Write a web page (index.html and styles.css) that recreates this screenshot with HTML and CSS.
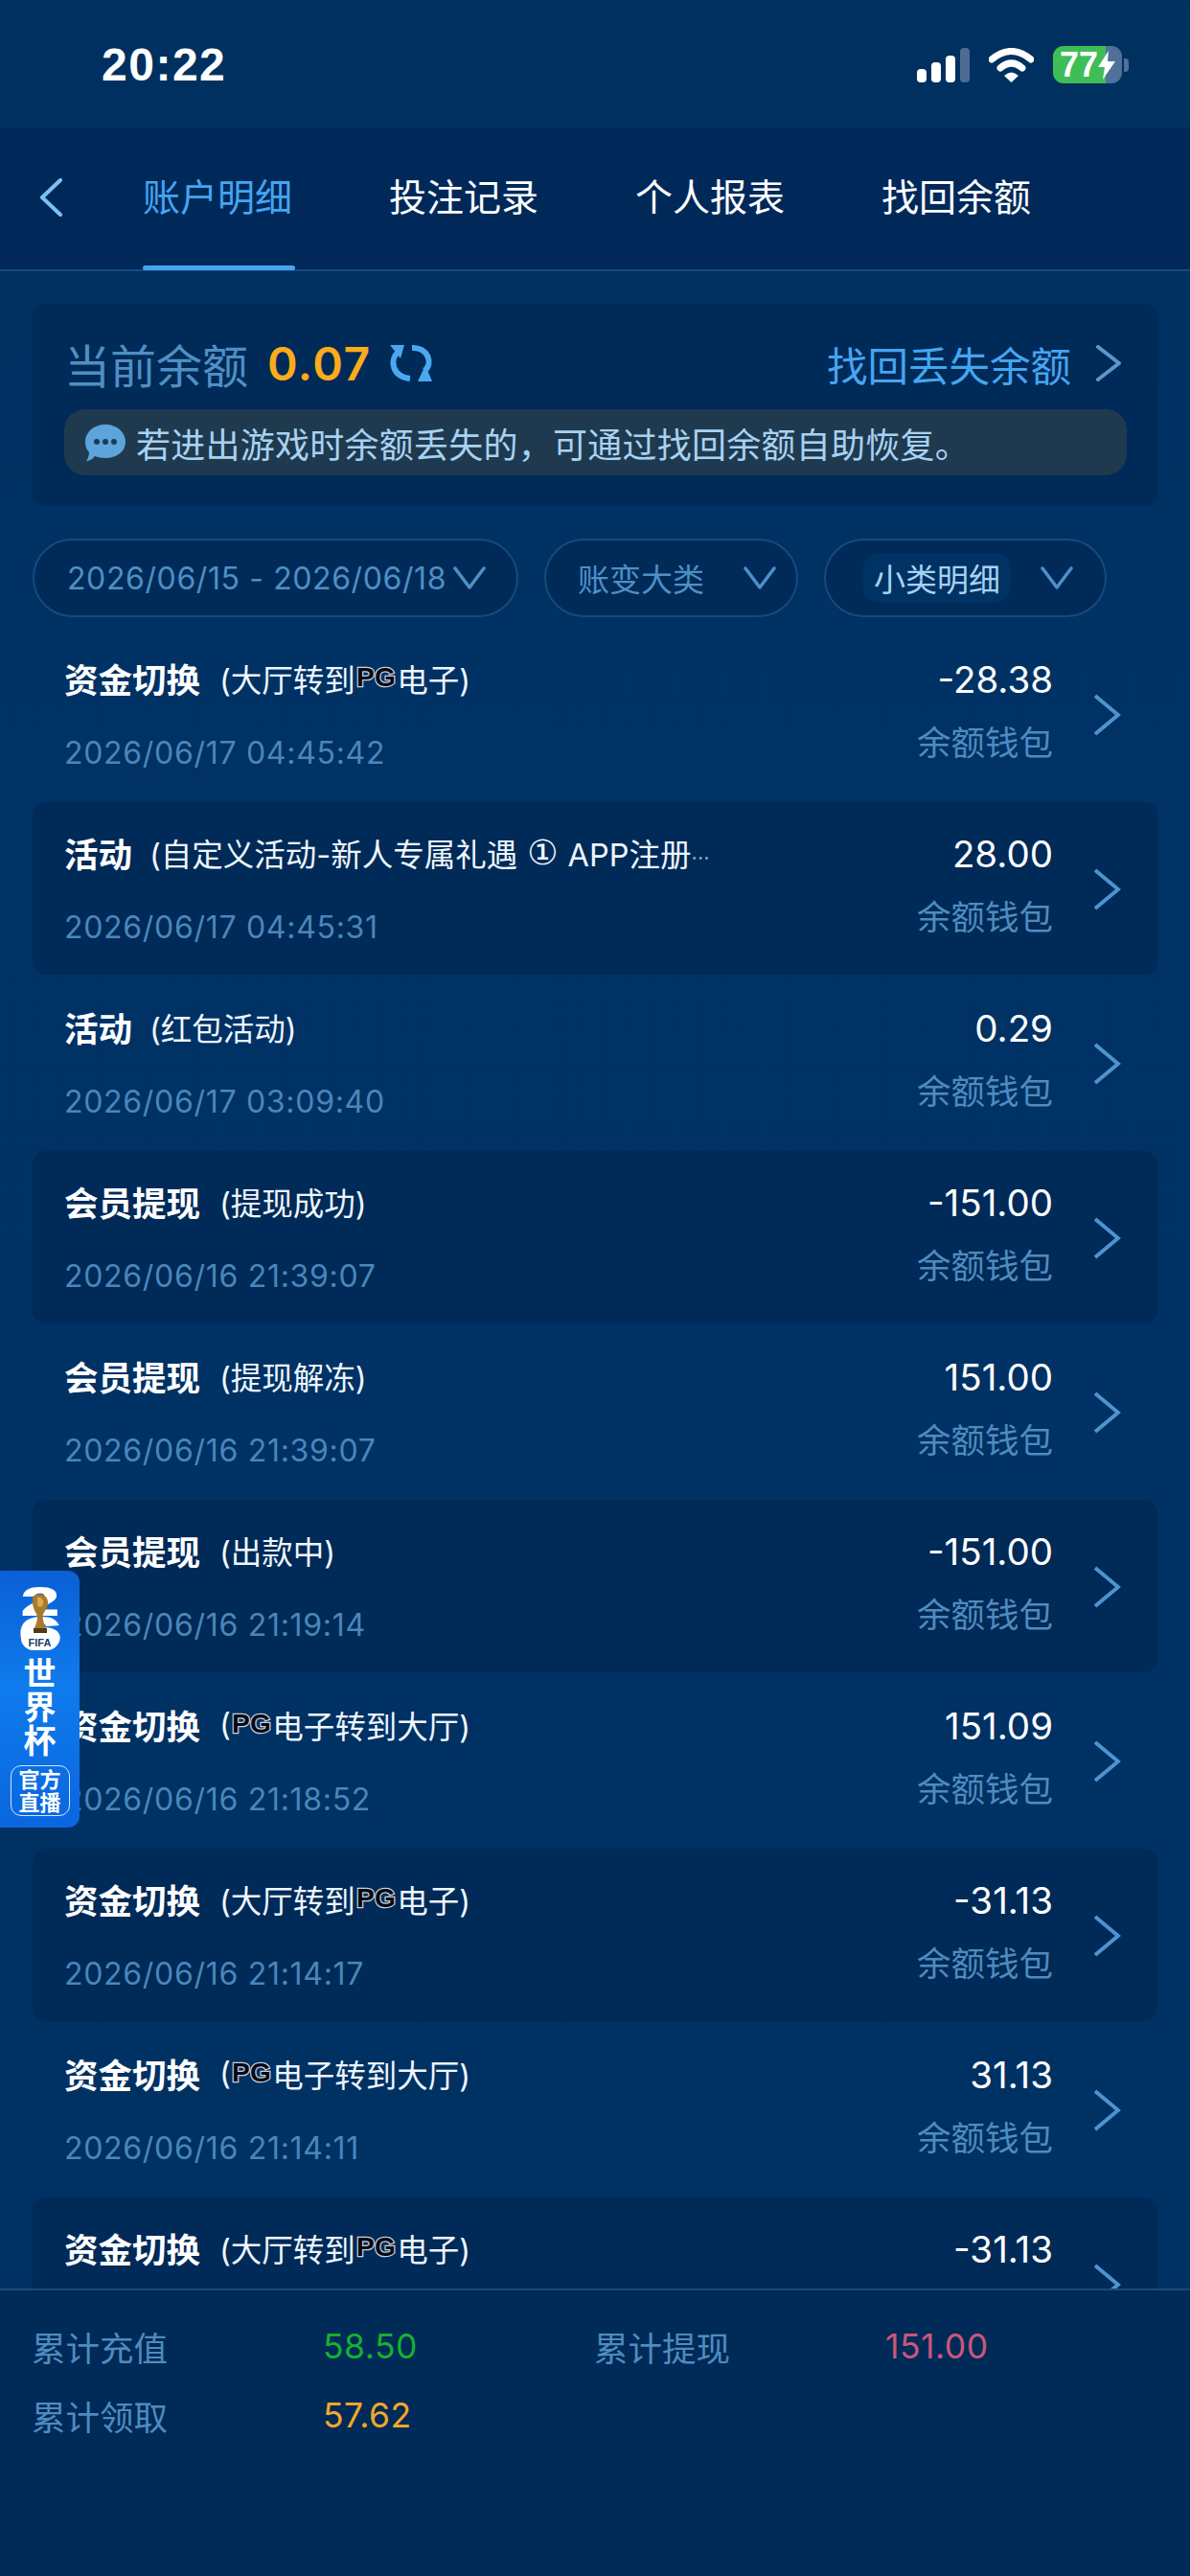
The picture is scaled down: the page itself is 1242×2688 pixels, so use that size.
FILE: index.html
```html
<!DOCTYPE html>
<html lang="zh-CN">
<head>
    <meta charset="UTF-8">
    <meta name="viewport" content="width=device-width, initial-scale=1.0">
    <title>账户明细</title>
    <link rel="stylesheet" href="styles.css">
</head>
<body>

<div class="app">
    <div class="status-bar">
        <span class="clock">20:22</span>
        <div class="status-icons">
            <svg class="signal" width="55" height="36" viewBox="0 0 55 36">
                <rect x="0" y="22" width="10" height="14" rx="4" fill="#fff"/>
                <rect x="15" y="15" width="10" height="21" rx="4" fill="#fff"/>
                <rect x="30" y="8" width="10" height="28" rx="4" fill="#fff"/>
                <rect x="45" y="0" width="10" height="36" rx="4" fill="#4d6b91"/>
            </svg>
            <svg class="wifi" width="47" height="36" viewBox="0 0 47 36">
                <path d="M3 12 Q23.500 -5 44 12" fill="none" stroke="#fff" stroke-width="7" stroke-linecap="round"/>
                <path d="M12 21 Q23.500 11 35 21" fill="none" stroke="#fff" stroke-width="7" stroke-linecap="round"/>
                <path d="M16 29 Q23.500 22 31 29 L23.500 36 Z" fill="#fff"/>
            </svg>
            <div class="battery">
                <div class="battery-body">
                    <span class="battery-num">77</span>
                    <svg class="battery-bolt" width="18" height="30" viewBox="0 0 18 30">
                        <path d="M11 0 L0 17 H7 L5 30 L18 11 H10 Z" fill="#fff"/>
                    </svg>
                </div>
                <div class="battery-cap"></div>
            </div>
        </div>
    </div>

    <div class="nav">
        <svg class="nav-back" width="26" height="40" viewBox="0 0 26 40">
            <path d="M23 2 L4 20 L23 38" fill="none" stroke="#7cc0f5" stroke-width="4" stroke-linecap="round" stroke-linejoin="round"/>
        </svg>
        <div class="tab active">账户明细</div>
        <div class="tab">投注记录</div>
        <div class="tab">个人报表</div>
        <div class="tab">找回余额</div>
    </div>

    <div class="balance-card">
        <div class="balance-top">
            <span class="balance-label">当前余额</span>
            <span class="balance-value">0.07</span>
            <svg class="refresh" width="46" height="40" viewBox="0 0 46 40">
                <path d="M10 8 C0 16 3 34 22 36" fill="none" stroke="#4aa8f2" stroke-width="6"/>
                <path d="M1 1 H16 L12 15 Z" fill="#4aa8f2"/>
                <path d="M24 4 C40 3 47 20 37 28" fill="none" stroke="#4aa8f2" stroke-width="6"/>
                <path d="M30 39 H45 L38 22 Z" fill="#4aa8f2"/>
            </svg>
            <span class="recover-link">找回丢失余额</span>
            <svg class="chevron-big" width="28" height="38" viewBox="0 0 28 38">
                <path d="M3 2 L25 19 L3 36" fill="none" stroke="#5b96cc" stroke-width="4" stroke-linecap="round" stroke-linejoin="round"/>
            </svg>
        </div>
        <div class="notice">
            <svg class="notice-icon" width="44" height="40" viewBox="0 0 44 40">
                <path d="M22 1 C34 1 43 9 43 19 C43 29 34 36 22 36 C18 36 14 35 11 34 C9 37 5 39 2 39 C4 36 5 33 5 30 C2 27 1 23 1 19 C1 9 10 1 22 1 Z" fill="#5ca4dc"/>
                <circle cx="13" cy="19" r="3" fill="#1d3a55"/>
                <circle cx="22" cy="19" r="3" fill="#1d3a55"/>
                <circle cx="31" cy="19" r="3" fill="#1d3a55"/>
            </svg>
            <span>若进出游戏时余额丢失的，可通过找回余额自助恢复。</span>
        </div>
    </div>

    <div class="filters">
        <div class="filter filter-date">
            <span>2026/06/15 - 2026/06/18</span>
            <svg width="34" height="24" viewBox="0 0 34 24"><path d="M2 2 L17 22 L32 2" fill="none" stroke="#4f8fc8" stroke-width="3.500" stroke-linecap="round" stroke-linejoin="round"/></svg>
        </div>
        <div class="filter filter-type">
            <span>账变大类</span>
            <svg width="34" height="24" viewBox="0 0 34 24"><path d="M2 2 L17 22 L32 2" fill="none" stroke="#4f8fc8" stroke-width="3.500" stroke-linecap="round" stroke-linejoin="round"/></svg>
        </div>
        <div class="filter filter-sub">
            <span class="filter-selected">小类明细</span>
            <svg width="34" height="24" viewBox="0 0 34 24"><path d="M2 2 L17 22 L32 2" fill="none" stroke="#4f8fc8" stroke-width="3.500" stroke-linecap="round" stroke-linejoin="round"/></svg>
        </div>
    </div>

    <div class="list">
        <div class="row">
            <div class="row-left">
                <div class="row-title"><b>资金切换</b><span class="row-sub">(大厅转到<i class="pg">PG</i>电子)</span></div>
                <div class="row-date">2026/06/17 04:45:42</div>
            </div>
            <div class="row-right"><div class="row-amount">-28.38</div><div class="row-wallet">余额钱包</div></div>
            <svg class="row-arrow" width="30" height="44" viewBox="0 0 30 44"><path d="M3 2 L27 22 L3 42" fill="none" stroke="#4f93cf" stroke-width="4"/></svg>
        </div>
        <div class="row">
            <div class="row-left">
                <div class="row-title"><b>活动</b><span class="row-sub activity-sub">(自定义活动-新人专属礼遇<em class="circled">①</em>APP注册<em class="more">...</em></span></div>
                <div class="row-date">2026/06/17 04:45:31</div>
            </div>
            <div class="row-right"><div class="row-amount">28.00</div><div class="row-wallet">余额钱包</div></div>
            <svg class="row-arrow" width="30" height="44" viewBox="0 0 30 44"><path d="M3 2 L27 22 L3 42" fill="none" stroke="#4f93cf" stroke-width="4"/></svg>
        </div>
        <div class="row">
            <div class="row-left">
                <div class="row-title"><b>活动</b><span class="row-sub activity-sub">(红包活动)</span></div>
                <div class="row-date">2026/06/17 03:09:40</div>
            </div>
            <div class="row-right"><div class="row-amount">0.29</div><div class="row-wallet">余额钱包</div></div>
            <svg class="row-arrow" width="30" height="44" viewBox="0 0 30 44"><path d="M3 2 L27 22 L3 42" fill="none" stroke="#4f93cf" stroke-width="4"/></svg>
        </div>
        <div class="row">
            <div class="row-left">
                <div class="row-title"><b>会员提现</b><span class="row-sub">(提现成功)</span></div>
                <div class="row-date">2026/06/16 21:39:07</div>
            </div>
            <div class="row-right"><div class="row-amount">-151.00</div><div class="row-wallet">余额钱包</div></div>
            <svg class="row-arrow" width="30" height="44" viewBox="0 0 30 44"><path d="M3 2 L27 22 L3 42" fill="none" stroke="#4f93cf" stroke-width="4"/></svg>
        </div>
        <div class="row">
            <div class="row-left">
                <div class="row-title"><b>会员提现</b><span class="row-sub">(提现解冻)</span></div>
                <div class="row-date">2026/06/16 21:39:07</div>
            </div>
            <div class="row-right"><div class="row-amount">151.00</div><div class="row-wallet">余额钱包</div></div>
            <svg class="row-arrow" width="30" height="44" viewBox="0 0 30 44"><path d="M3 2 L27 22 L3 42" fill="none" stroke="#4f93cf" stroke-width="4"/></svg>
        </div>
        <div class="row">
            <div class="row-left">
                <div class="row-title"><b>会员提现</b><span class="row-sub">(出款中)</span></div>
                <div class="row-date">2026/06/16 21:19:14</div>
            </div>
            <div class="row-right"><div class="row-amount">-151.00</div><div class="row-wallet">余额钱包</div></div>
            <svg class="row-arrow" width="30" height="44" viewBox="0 0 30 44"><path d="M3 2 L27 22 L3 42" fill="none" stroke="#4f93cf" stroke-width="4"/></svg>
        </div>
        <div class="row">
            <div class="row-left">
                <div class="row-title"><b>资金切换</b><span class="row-sub">(<i class="pg">PG</i>电子转到大厅)</span></div>
                <div class="row-date">2026/06/16 21:18:52</div>
            </div>
            <div class="row-right"><div class="row-amount">151.09</div><div class="row-wallet">余额钱包</div></div>
            <svg class="row-arrow" width="30" height="44" viewBox="0 0 30 44"><path d="M3 2 L27 22 L3 42" fill="none" stroke="#4f93cf" stroke-width="4"/></svg>
        </div>
        <div class="row">
            <div class="row-left">
                <div class="row-title"><b>资金切换</b><span class="row-sub">(大厅转到<i class="pg">PG</i>电子)</span></div>
                <div class="row-date">2026/06/16 21:14:17</div>
            </div>
            <div class="row-right"><div class="row-amount">-31.13</div><div class="row-wallet">余额钱包</div></div>
            <svg class="row-arrow" width="30" height="44" viewBox="0 0 30 44"><path d="M3 2 L27 22 L3 42" fill="none" stroke="#4f93cf" stroke-width="4"/></svg>
        </div>
        <div class="row">
            <div class="row-left">
                <div class="row-title"><b>资金切换</b><span class="row-sub">(<i class="pg">PG</i>电子转到大厅)</span></div>
                <div class="row-date">2026/06/16 21:14:11</div>
            </div>
            <div class="row-right"><div class="row-amount">31.13</div><div class="row-wallet">余额钱包</div></div>
            <svg class="row-arrow" width="30" height="44" viewBox="0 0 30 44"><path d="M3 2 L27 22 L3 42" fill="none" stroke="#4f93cf" stroke-width="4"/></svg>
        </div>
        <div class="row">
            <div class="row-left">
                <div class="row-title"><b>资金切换</b><span class="row-sub">(大厅转到<i class="pg">PG</i>电子)</span></div>
            </div>
            <div class="row-right"><div class="row-amount">-31.13</div></div>
            <svg class="row-arrow" width="30" height="44" viewBox="0 0 30 44"><path d="M3 2 L27 22 L3 42" fill="none" stroke="#4f93cf" stroke-width="4"/></svg>
        </div>
    </div>

    <div class="totals">
        <div class="total-item"><span class="total-label">累计充值</span><span class="total-value green">58.50</span></div>
        <div class="total-item"><span class="total-label">累计提现</span><span class="total-value red">151.00</span></div>
        <div class="total-item"><span class="total-label">累计领取</span><span class="total-value orange">57.62</span></div>
    </div>

    <!-- floating world cup badge -->
    <div class="wc-badge">
        <div class="wc-logo">
            <span class="wc-digit wc-two">2</span>
            <span class="wc-digit wc-six">6</span>
            <span class="wc-bowl"></span>
            <svg class="wc-trophy" width="20" height="42" viewBox="0 0 20 42">
                <path d="M3 2 C8 -1 17 0 18 8 C19 14 14 18 13 22 C12 27 14 31 16 36 H4 C6 31 8 26 6 21 C3 16 0 8 3 2 Z" fill="#a97a2a"/>
                <path d="M7 4 C11 3 14 6 13 11 C12 14 9 15 7 12 Z" fill="#d9aa55"/>
                <rect x="3" y="36" width="14" height="5" fill="#4d3a18"/>
            </svg>
            <span class="wc-fifa">FIFA</span>
        </div>
        <div class="wc-title">世界杯</div>
        <div class="wc-live">官方<br>直播</div>
    </div>
</div>

</body>
</html>
```

FILE: styles.css
```css
* {
    box-sizing: border-box;
}

body {
    margin: 0;
    background-color: #003163;
    font-family: Inter, "Noto Sans CJK SC", sans-serif;
    color: #fff;
}

.app {
    position: relative;
    width: 1242px;
    height: 2688px;
    display: flex;
    flex-direction: column;
    overflow: hidden;
    background: linear-gradient(#00305f, #003265 30%, #003163);
}

/* status bar */
.status-bar {
    height: 133px;
    flex: none;
    display: flex;
    align-items: flex-start;
    justify-content: space-between;
    padding: 48px 64px 0 106px;
}

.clock {
    font-family: "Liberation Sans", sans-serif;
    font-size: 48px;
    line-height: 40px;
    font-weight: bold;
    letter-spacing: 1.500px;
}

.status-icons {
    display: flex;
    align-items: flex-start;
    gap: 20px;
}

.signal, .wifi {
    margin-top: 2px;
}

.battery {
    display: flex;
    align-items: center;
    gap: 2px;
}

.battery-body {
    width: 72px;
    height: 39px;
    border-radius: 11px;
    display: flex;
    align-items: center;
    padding-left: 7px;
    background: linear-gradient(90deg, #3fbd57 0, #3fbd57 55px, #50709a 55px);
}

.battery-num {
    font-family: "Liberation Sans", sans-serif;
    font-size: 36px;
    font-weight: bold;
    line-height: 39px;
}

.battery-cap {
    width: 5px;
    height: 14px;
    border-radius: 0 4px 4px 0;
    background: #50709a;
}

/* tabs */
.nav {
    height: 150px;
    flex: none;
    display: flex;
    align-items: stretch;
    gap: 101px;
    padding-left: 149px;
    position: relative;
    background: #00295a;
    border-bottom: 2px solid #174b80;
}

.nav-back {
    position: absolute;
    left: 40px;
    top: 53px;
}

.tab {
    width: 156px;
    font-size: 39px;
    line-height: 146px;
    white-space: nowrap;
    position: relative;
}

.tab.active {
    color: #45a5f0;
}

.tab.active::after {
    content: "";
    position: absolute;
    left: 0;
    right: -3px;
    bottom: -1px;
    height: 5px;
    border-radius: 3px;
    background: #45a5f0;
}

/* balance */
.balance-card {
    flex: none;
    height: 211px;
    margin: 34px 34px 0;
    padding: 35px 32px 0 33px;
    border-radius: 14px;
    background: #002a57;
}

.balance-top {
    display: flex;
    align-items: center;
    height: 54px;
}

.balance-label {
    font-size: 48px;
    color: #4f8fc4;
    white-space: nowrap;
}

.balance-value {
    margin-left: 20px;
    font-size: 48px;
    font-weight: 600;
    letter-spacing: 1.500px;
    color: #fbab1c;
}

.refresh {
    margin-left: 18px;
}

.recover-link {
    margin-left: auto;
    font-size: 42.500px;
    color: #45a5f0;
    white-space: nowrap;
}

.chevron-big {
    margin-left: 25px;
    margin-right: 5px;
}

.notice {
    margin-top: 21px;
    height: 69px;
    display: flex;
    align-items: center;
    gap: 10px;
    padding-left: 21px;
    border-radius: 22px;
    background: #1f3a4f;
    font-size: 36px;
    letter-spacing: 0.250px;
    color: #a8d2f2;
    white-space: nowrap;
}

/* filter pills */
.filters {
    flex: none;
    display: flex;
    gap: 27px;
    margin: 34px 0 0 34px;
}

.filter {
    height: 82px;
    display: flex;
    align-items: center;
    justify-content: space-between;
    border: 2px solid #164a7e;
    border-radius: 41px;
    background: #002b59;
    font-size: 32px;
    color: #4f8fc4;
    white-space: nowrap;
}

.filter-date {
    width: 507px;
    padding: 0 32px 0 34px;
    letter-spacing: 0.600px;
}

.filter-type {
    width: 265px;
    padding: 0 21px 0 33px;
    font-size: 33px;
}

.filter-sub {
    width: 295px;
    padding: 0 33px 0 39px;
}

.filter-selected {
    padding: 2px 11px;
    border-radius: 16px;
    background: #003264;
    color: #a8d2f2;
    font-size: 33px;
}

/* list */
.list {
    flex: 1;
    min-height: 0;
    overflow: hidden;
    margin: 11px 34px 0;
}

.row {
    height: 180px;
    margin-bottom: 2px;
    display: flex;
    align-items: flex-start;
    padding: 0 0 0 33px;
    border-radius: 14px;
    position: relative;
}

.row:nth-child(even) {
    background: #002a57;
}

.row-left {
    flex: 1;
    min-width: 0;
}

.row-title {
    display: flex;
    align-items: center;
    height: 46px;
    margin-top: 29px;
    white-space: nowrap;
}

.row-title b {
    font-size: 35.500px;
    font-weight: bold;
}

.row-sub {
    display: flex;
    align-items: center;
    margin-left: 20px;
    font-size: 32.500px;
    color: #eef6fd;
}

.activity-sub {
    margin-left: 18px;
}

.pg {
    font-family: "Liberation Sans", sans-serif;
    font-size: 28px;
    font-style: normal;
    font-weight: bold;
    color: #060812;
    -webkit-text-stroke: 2.500px #c9d2de;
    paint-order: stroke fill;
    letter-spacing: 0.500px;
    margin: 0 1px;
}

.circled {
    font-family: "DejaVu Sans", sans-serif;
    font-style: normal;
    font-size: 36px;
    margin: 0 10px;
}

.more {
    font-style: normal;
    font-size: 22px;
    color: #7ea9cf;
}

.row-date {
    margin-top: 33px;
    font-size: 32px;
    line-height: 46px;
    letter-spacing: 0.700px;
    color: #4a86bb;
    white-space: nowrap;
}

.row-right {
    width: 220px;
    text-align: right;
    margin-top: 31px;
}

.row-amount {
    font-size: 38.500px;
    line-height: 46px;
}

.row-wallet {
    margin-top: 21px;
    font-size: 35.500px;
    line-height: 46px;
    color: #4f8bbf;
}

.row-arrow {
    flex: none;
    margin: 69px 38px 0 41px;
}

/* totals */
.totals {
    flex: none;
    height: 300px;
    position: relative;
    display: flex;
    flex-wrap: wrap;
    align-content: flex-start;
    gap: 32px 0;
    padding: 38px 0 0 33px;
    background: #002a57;
    border-top: 2px solid #174b80;
}

.total-item {
    width: 587px;
    height: 40px;
    display: flex;
    align-items: center;
    font-size: 35.500px;
    white-space: nowrap;
}

.total-label {
    width: 304px;
    color: #4f8bbf;
}

.total-value {
    letter-spacing: 0.500px;
}

.green {
    color: #15b030;
}

.red {
    color: #c9567a;
}

.orange {
    color: #f2a72a;
}

/* world cup badge */
.wc-badge {
    position: absolute;
    left: 0;
    top: 1639px;
    width: 83px;
    height: 268px;
    display: flex;
    flex-direction: column;
    align-items: center;
    border-radius: 0 12px 12px 0;
    background: linear-gradient(#0a5fd6, #0f7bec 45%, #0a66e0);
}

.wc-logo {
    position: relative;
    width: 44px;
    height: 66px;
    margin-top: 17px;
}

.wc-digit {
    position: absolute;
    left: 0;
    width: 44px;
    text-align: center;
    font-family: "Liberation Sans", sans-serif;
    font-weight: bold;
    color: #fff;
    -webkit-text-stroke: 2px #fff;
    transform: scaleX(1.700);
}

.wc-two {
    top: 0;
    font-size: 40px;
    line-height: 30px;
}

.wc-six {
    top: 31px;
    font-size: 46px;
    line-height: 35px;
}

.wc-bowl {
    position: absolute;
    left: 2px;
    right: 2px;
    top: 48px;
    height: 18px;
    border-radius: 6px 6px 14px 14px;
    background: #fff;
}

.wc-trophy {
    position: absolute;
    left: 12px;
    top: 7px;
}

.wc-fifa {
    position: absolute;
    left: 0;
    right: 0;
    bottom: 2px;
    text-align: center;
    font-family: "Liberation Sans", sans-serif;
    font-size: 11px;
    font-weight: bold;
    color: #1c3c66;
}

.wc-title {
    width: 36px;
    margin-top: 7px;
    font-size: 34px;
    line-height: 35px;
    font-weight: bold;
    text-align: center;
}

.wc-live {
    width: 62px;
    height: 53px;
    margin-top: 8px;
    border: 1px solid #cfe6ff;
    border-radius: 11px;
    font-size: 22px;
    line-height: 24px;
    font-weight: bold;
    text-align: center;
    padding-top: 2px;
}
```
